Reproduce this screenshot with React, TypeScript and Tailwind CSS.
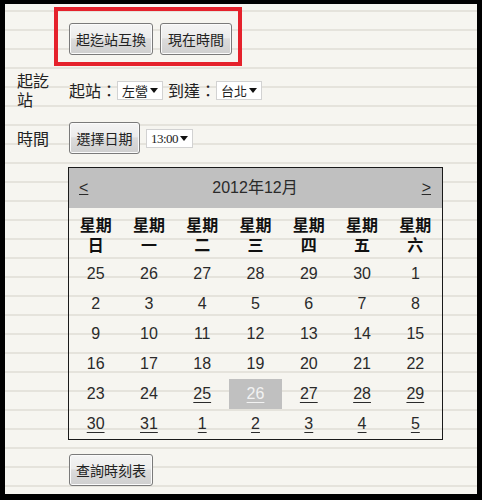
import React from 'react';

const cjk = "font-['Noto_Sans_CJK_TC','Noto_Sans_CJK_SC',sans-serif]";

function Btn({ children, w }: { children: React.ReactNode; w: string }) {
  return (
    <button
      className={`${w} h-[32px] rounded-[3px] border border-[#7a7a7a] bg-[linear-gradient(to_bottom,#f4f4f4_0%,#ececec_45%,#dcdcdc_50%,#cfcfcf_100%)] shadow-[inset_0_0_0_1px_#fbfbfb] text-[14px] text-[#222] ${cjk} flex items-center justify-center`}
    >
      {children}
    </button>
  );
}

function FakeSelect({ value, w, serif }: { value: string; w: string; serif?: boolean }) {
  return (
    <span
      className={`${w} h-[19px] inline-flex items-center justify-between border border-[#d2d2d2] bg-white pl-[4px] pr-[4px] text-[13px] text-[#222] ${
        serif ? "font-['Liberation_Serif',serif] tracking-[-0.5px] pl-[2px]" : cjk
      }`}
    >
      <span className="leading-none">{value}</span>
      <span className="w-0 h-0 border-l-[4px] border-r-[4px] border-t-[5px] border-l-transparent border-r-transparent border-t-[#111]" />
    </span>
  );
}

const weekdays = ['日', '一', '二', '三', '四', '五', '六'];

const weeks: { d: number; link: boolean; sel?: boolean }[][] = [
  [25, 26, 27, 28, 29, 30, 1].map((d) => ({ d, link: false })),
  [2, 3, 4, 5, 6, 7, 8].map((d) => ({ d, link: false })),
  [9, 10, 11, 12, 13, 14, 15].map((d) => ({ d, link: false })),
  [16, 17, 18, 19, 20, 21, 22].map((d) => ({ d, link: false })),
  [
    { d: 23, link: false },
    { d: 24, link: false },
    { d: 25, link: true },
    { d: 26, link: true, sel: true },
    { d: 27, link: true },
    { d: 28, link: true },
    { d: 29, link: true },
  ],
  [30, 31, 1, 2, 3, 4, 5].map((d) => ({ d, link: true })),
];

function Calendar() {
  return (
    <div className="w-[375px] border border-[#1a1a1a] font-['Liberation_Sans',Arial,sans-serif] text-[16px] text-[#2a2a2a]">
      <div className="h-[40px] bg-[#c0c0c0] flex items-center justify-between pl-[10px] pr-[11px]">
        <span className="underline">&lt;</span>
        <span className="font-['Liberation_Sans','Noto_Sans_CJK_TC',sans-serif]">2012年12月</span>
        <span className="underline">&gt;</span>
      </div>
      <div className="grid grid-cols-7">
        {weekdays.map((w) => (
          <div key={w} className={`pt-[6px] pb-[5px] flex flex-col items-center font-bold text-[16px] text-[#111] ${cjk}`}>
            <div className="h-[20px] leading-[20px]">星期</div>
            <div className="h-[20px] leading-[20px]">{w}</div>
          </div>
        ))}
        {weeks.flat().map((c, i) => (
          <div
            key={i}
            className={`h-[30px] flex items-center justify-center ${c.sel ? 'bg-[#c0c0c0] text-[#f2f2f2]' : ''} ${
              c.link ? 'underline underline-offset-[3px]' : ''
            }`}
          >
            {c.d}
          </div>
        ))}
      </div>
    </div>
  );
}

export default function App() {
  return (
    <div className="w-[482px] h-[500px] bg-black pt-[4px] pl-[5px] pr-[5px] pb-[6px]">
      <div className="h-full bg-[#f6f5f0] bg-[image:repeating-linear-gradient(to_bottom,transparent_0px,transparent_6px,#e5e3dc_6px,#e5e3dc_8px,transparent_8px,transparent_19px)] text-[#222]">
        <div className="pt-[3px] pl-[49px]">
          <div className="w-[188px] h-[59px] border-[4px] border-[#e5212b] pt-[12px] pl-[11px] flex gap-[7px]">
            <Btn w="w-[84px]">起迄站互換</Btn>
            <Btn w="w-[72px]">現在時間</Btn>
          </div>
        </div>

        <div className={`mt-[5px] flex items-center ${cjk} text-[16px]`}>
          <div className="w-[64px] pl-[12px]">
            <div className="w-[34px] leading-[19px]">起訖站</div>
          </div>
          <div className="flex items-center">
            <span>起站：</span>
            <FakeSelect value="左營" w="w-[46px]" />
            <span className="ml-[5px]">到達：</span>
            <FakeSelect value="台北" w="w-[46px]" />
          </div>
        </div>

        <div className={`mt-[13px] flex items-center ${cjk} text-[16px]`}>
          <div className="w-[64px] pl-[12px]">時間</div>
          <div className="flex items-center gap-[6px]">
            <Btn w="w-[71px]">選擇日期</Btn>
            <FakeSelect value="13:00" w="w-[47px]" serif />
          </div>
        </div>

        <div className="mt-[13px] pl-[63px]">
          <Calendar />
        </div>

        <div className="mt-[14px] pl-[64px]">
          <Btn w="w-[84px]">查詢時刻表</Btn>
        </div>
      </div>
    </div>
  );
}
